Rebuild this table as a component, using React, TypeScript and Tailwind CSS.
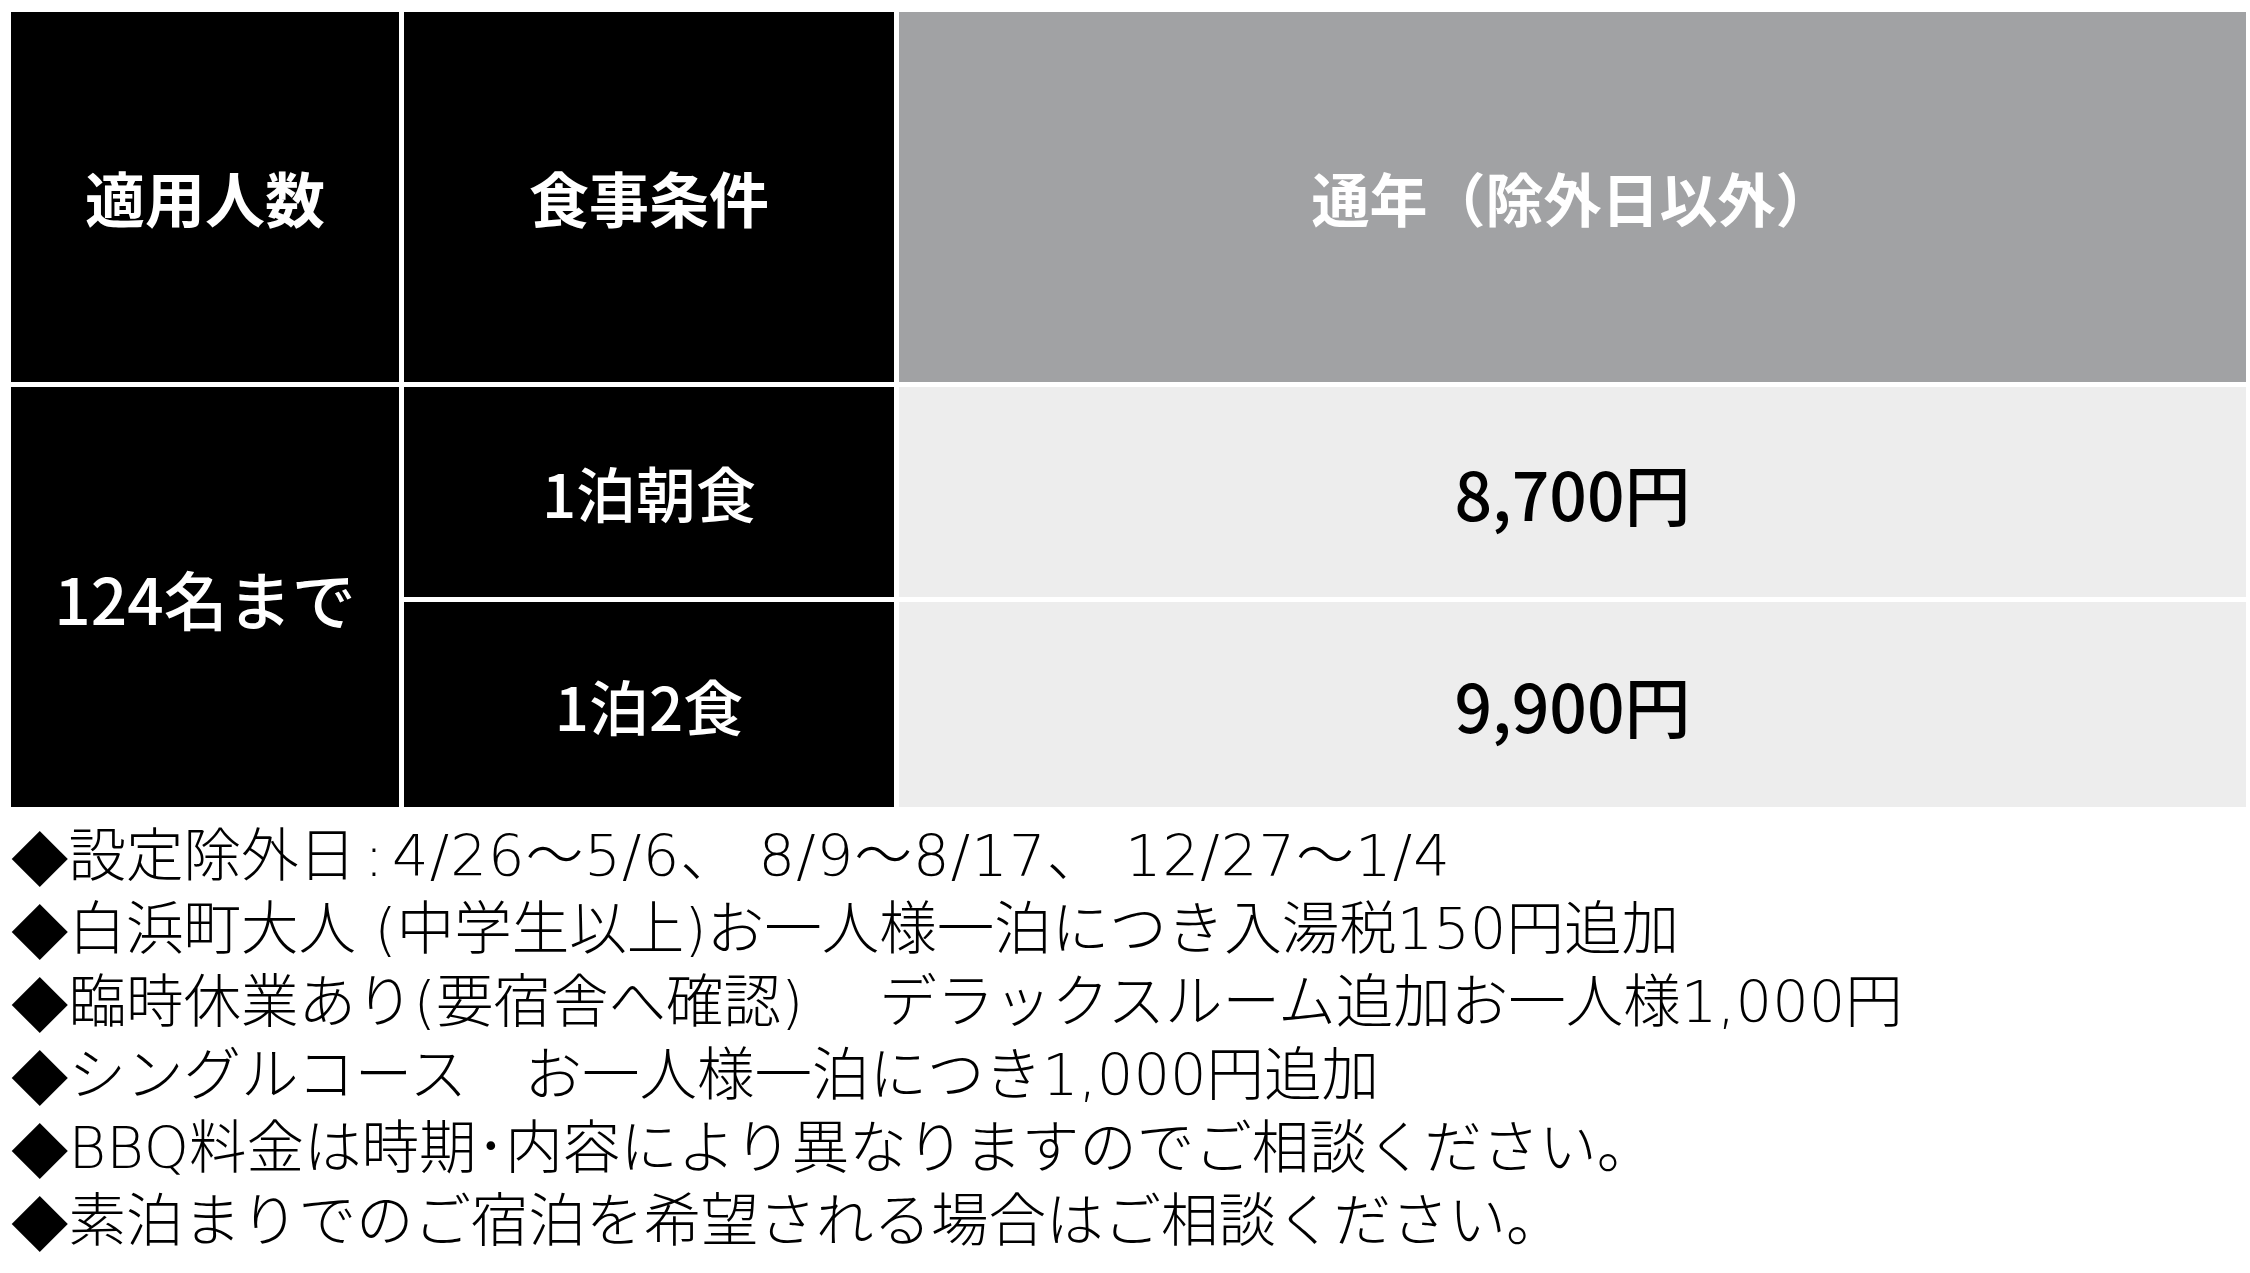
const cjk = { fontFamily: '"Noto Sans CJK JP", "Noto Sans", sans-serif' };
const noteFont = { fontFamily: '"DejaVu Sans", "Noto Sans CJK JP", sans-serif' };

const notes = [
  '白浜町大人 (中学生以上)お一人様一泊につき入湯税150円追加',
  '臨時休業あり(要宿舎へ確認)　 デラックスルーム追加お一人様1,000円',
  'シングルコース　お一人様一泊につき1,000円追加',
  'BBQ料金は時期･内容により異なりますのでご相談ください。',
  '素泊まりでのご宿泊を希望される場合はご相談ください。',
];

function Diamond() {
  return <span style={cjk}>◆</span>;
}

export default function App() {
  return (
    <div className="min-h-screen bg-white pl-[11px] pt-[12px]" style={cjk}>
      {/* price table */}
      <div className="grid w-[2235px] grid-cols-[388px_490px_1fr] grid-rows-[370px_210px_205px] gap-x-[5px] gap-y-[5px]">
        <div className="flex items-center justify-center bg-black text-[60px] font-bold text-white">適用人数</div>
        <div className="flex items-center justify-center bg-black text-[60px] font-bold text-white">食事条件</div>
        <div className="flex items-center justify-center bg-[#a1a2a4] text-[58px] font-bold text-white">通年（除外日以外）</div>

        <div className="row-span-2 flex items-center justify-center bg-black text-[64px] font-medium text-white">124名まで</div>
        <div className="flex items-center justify-center bg-black text-[60px] font-medium text-white">1泊朝食</div>
        <div className="flex items-center justify-center bg-[#ededed] text-[66px] font-medium text-black">8,700円</div>

        <div className="flex items-center justify-center bg-black text-[60px] font-medium text-white">1泊2食</div>
        <div className="flex items-center justify-center bg-[#ededed] text-[66px] font-medium text-black">9,900円</div>
      </div>

      <div className="mt-[13px] text-[57.5px] font-extralight leading-[73px] text-black" style={noteFont}>
        <p className="flex h-[73px] items-center whitespace-pre">
          <Diamond />
          設定除外日
          <span className="inline-block w-[36px] text-center">:</span>
          <span className="tracking-[0.02em]">4/26～5/6、 8/9～8/17、 12/27～1/4</span>
        </p>
        {notes.map((n) => (
          <p key={n} className="flex h-[73px] items-center whitespace-pre">
            <Diamond />
            {n}
          </p>
        ))}
      </div>
    </div>
  );
}
